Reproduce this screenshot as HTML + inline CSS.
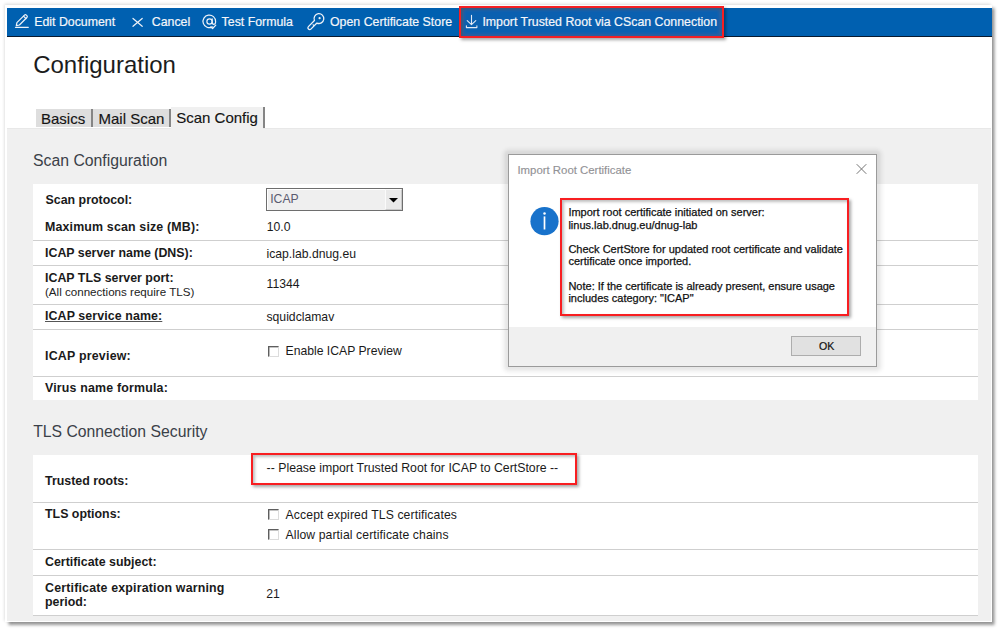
<!DOCTYPE html>
<html><head><meta charset="utf-8"><title>Configuration</title>
<style>
html,body{margin:0;padding:0;}
body{width:1000px;height:631px;overflow:hidden;position:relative;background:#fff;font-family:"Liberation Sans",sans-serif;}
.t{position:absolute;white-space:nowrap;line-height:1;}
.r{position:absolute;}
</style></head><body>
<div class="r" style="left:5px;top:4.5px;width:986.6px;height:617.5px;background:#fff;box-shadow:2.5px 3px 3px rgba(0,0,0,0.42),-1.5px -1px 3px rgba(0,0,0,0.15);"></div>
<div class="r" style="left:7px;top:8px;width:984.6px;height:613px;background:#fff;"></div>
<div class="r" style="left:7px;top:8px;width:984.6px;height:29px;background:#0060b0;border-bottom:1px solid #081a30;box-sizing:border-box;"></div>
<div class="t" style="left:34.20px;top:15.75px;font-size:12.35px;color:#f4f6fa;font-weight:normal;-webkit-text-stroke:0.2px #f4f6fa;">Edit Document</div>
<div class="t" style="left:151.80px;top:15.75px;font-size:12.35px;color:#f4f6fa;font-weight:normal;-webkit-text-stroke:0.2px #f4f6fa;">Cancel</div>
<div class="t" style="left:221.60px;top:15.75px;font-size:12.35px;color:#f4f6fa;font-weight:normal;-webkit-text-stroke:0.2px #f4f6fa;">Test Formula</div>
<div class="t" style="left:330.00px;top:15.75px;font-size:12.35px;color:#f4f6fa;font-weight:normal;-webkit-text-stroke:0.2px #f4f6fa;">Open Certificate Store</div>
<div class="r" style="left:459px;top:6px;width:265px;height:32px;border:2px solid #f81e21;box-sizing:border-box;background:#2f5f9f;box-shadow:2px 2px 3px rgba(0,0,0,0.35), inset 2px 2px 3px rgba(80,80,80,0.5);"></div>
<div class="r" style="left:464px;top:10px;width:255px;height:24px;background:#0a60b0;filter:blur(1.5px);"></div>
<div class="t" style="left:482.40px;top:15.75px;font-size:12.35px;color:#f4f6fa;font-weight:normal;-webkit-text-stroke:0.2px #f4f6fa;">Import Trusted Root via CScan Connection</div>
<svg class="r" style="left:0;top:0" width="1000" height="40" viewBox="0 0 1000 40">
<g fill="none" stroke="#eef2f8" stroke-width="1.2" stroke-linecap="round" stroke-linejoin="round">
<path d="M15.5 27.3 H28.3"/>
<path d="M16.3 25.6 L16.9 22.6 L24.5 15.1 Q25.4 14.2 26.3 15.1 L26.9 15.7 Q27.8 16.6 26.9 17.5 L19.4 25.0 Z"/>
<path d="M23.5 16.1 L25.9 18.5"/>
<path d="M133 18.5 L142.2 26.3 M142.2 18.5 L133 26.3"/>
<path d="M212.3 26.9 A6.3 6.3 0 1 1 215.6 21.5 L215.6 22.3 Q215.6 24.3 213.9 24.3 Q212.2 24.3 212.2 22.3 L212.2 18.8"/>
<circle cx="209.5" cy="21.5" r="2.6"/>
<path d="M210.8 27.0 L212.6 28.5 L215.8 25.1"/>
</g>
<g transform="translate(318.9 18.6) rotate(135)" fill="none" stroke="#eef2f8" stroke-width="1.3" stroke-linejoin="round">
<path d="M4.55 -1.75 A4.9 4.9 0 1 0 4.55 1.75 L13.1 1.75 Q14.8 1.75 14.8 0 Q14.8 -1.75 13.1 -1.75 Z"/>
<path d="M8.5 -1.75 V0.2" stroke-width="1"/>
</g>
<circle cx="319.6" cy="18.2" r="1.1" fill="#eef2f8"/>
<g fill="none" stroke="#e2e9f4" stroke-width="1.1" stroke-linecap="round" stroke-linejoin="round">
<path d="M471.5 15.3 V24.4 M467.2 20.6 L471.5 24.6 L475.8 20.6"/>
<path d="M466.4 25.7 V27.6 H476.9 V25.7"/>
</g>
</svg>
<div class="t" style="left:33.20px;top:52.98px;font-size:24px;color:#1c1c1c;font-weight:normal;">Configuration</div>
<div class="r" style="left:7px;top:128px;width:984px;height:492.6px;background:#f0f0f0;border-top:1px solid #e8e8e8;box-sizing:border-box;"></div>
<div class="r" style="left:36px;top:109px;width:55px;height:18px;background:#dedede;"></div>
<div class="r" style="left:91px;top:109px;width:1.5px;height:18px;background:#858585;"></div>
<div class="r" style="left:92.5px;top:109px;width:76.5px;height:18px;background:#dedede;"></div>
<div class="r" style="left:169px;top:109px;width:1.6999999999999886px;height:18px;background:#858585;"></div>
<div class="r" style="left:170.7px;top:107px;width:92.30000000000001px;height:22px;background:#f0f0f0;"></div>
<div class="r" style="left:263px;top:107px;width:1.5px;height:21px;background:#858585;"></div>
<div class="t" style="left:41.00px;top:111.30px;font-size:15px;color:#141414;font-weight:normal;-webkit-text-stroke:0.15px #141414;">Basics</div>
<div class="t" style="left:98.50px;top:111.30px;font-size:15px;color:#141414;font-weight:normal;-webkit-text-stroke:0.15px #141414;">Mail Scan</div>
<div class="t" style="left:176.20px;top:110.10px;font-size:15px;color:#141414;font-weight:normal;-webkit-text-stroke:0.15px #141414;">Scan Config</div>
<div class="t" style="left:33.00px;top:152.73px;font-size:15.8px;color:#3a4048;font-weight:normal;">Scan Configuration</div>
<div class="r" style="left:33px;top:184px;width:945px;height:216px;background:#fff;"></div>
<div class="r" style="left:33px;top:240px;width:945px;height:1px;background:#cfcfcf;"></div>
<div class="r" style="left:33px;top:265px;width:945px;height:1px;background:#cfcfcf;"></div>
<div class="r" style="left:33px;top:304px;width:945px;height:1px;background:#cfcfcf;"></div>
<div class="r" style="left:33px;top:329px;width:945px;height:1px;background:#cfcfcf;"></div>
<div class="r" style="left:33px;top:376px;width:945px;height:1px;background:#cfcfcf;"></div>
<div class="t" style="left:45.50px;top:193.50px;font-size:12.4px;color:#1a1a1a;font-weight:bold;">Scan protocol:</div>
<div class="t" style="left:45.00px;top:220.70px;font-size:12.4px;color:#1a1a1a;font-weight:bold;letter-spacing:0.16px;">Maximum scan size (MB):</div>
<div class="t" style="left:45.00px;top:246.50px;font-size:12.4px;color:#1a1a1a;font-weight:bold;">ICAP server name (DNS):</div>
<div class="t" style="left:45.00px;top:271.50px;font-size:12.4px;color:#1a1a1a;font-weight:bold;">ICAP TLS server port:</div>
<div class="t" style="left:45.00px;top:285.68px;font-size:11.6px;color:#222;font-weight:normal;">(All connections require TLS)</div>
<div class="t" style="left:45.00px;top:310.30px;font-size:12.4px;color:#1a1a1a;font-weight:bold;text-decoration:underline;text-decoration-color:#555;letter-spacing:0.1px;">ICAP service name:</div>
<div class="t" style="left:45.00px;top:349.50px;font-size:12.4px;color:#1a1a1a;font-weight:bold;letter-spacing:0.22px;">ICAP preview:</div>
<div class="t" style="left:45.00px;top:382.00px;font-size:12.4px;color:#1a1a1a;font-weight:bold;letter-spacing:0.18px;">Virus name formula:</div>
<div class="r" style="left:266px;top:188px;width:137px;height:23px;background:#efefef;border:1px solid #6e6e6e;box-sizing:border-box;box-shadow:inset 1px 1px 0 #fff;"></div>
<div class="r" style="left:385px;top:189px;width:17px;height:21px;background:#e9e9e9;border:1px solid;border-color:#fafafa #c8c8c8 #c8c8c8 #fafafa;box-sizing:border-box;"></div>
<svg class="r" style="left:389px;top:198px" width="9" height="5"><path d="M0 0 H9 L4.5 4.6 Z" fill="#000"/></svg>
<div class="t" style="left:270.20px;top:193.37px;font-size:12.2px;color:#5b5b70;font-weight:normal;">ICAP</div>
<div class="t" style="left:266.80px;top:220.87px;font-size:12.2px;color:#1a1a1a;font-weight:normal;">10.0</div>
<div class="t" style="left:266.50px;top:247.57px;font-size:12.2px;color:#1a1a1a;font-weight:normal;">icap.lab.dnug.eu</div>
<div class="t" style="left:266.60px;top:277.67px;font-size:12.2px;color:#1a1a1a;font-weight:normal;">11344</div>
<div class="t" style="left:266.50px;top:310.57px;font-size:12.2px;color:#1a1a1a;font-weight:normal;">squidclamav</div>
<div class="r" style="left:268px;top:345.5px;width:11px;height:11.0px;background:#fff;border:1px solid;border-color:#5e5e5e #dcdcdc #dcdcdc #5e5e5e;box-sizing:border-box;box-shadow:inset 0.6px 0.6px 0 #8a8a8a;"></div>
<div class="t" style="left:285.50px;top:345.27px;font-size:12.2px;color:#1a1a1a;font-weight:normal;">Enable ICAP Preview</div>
<div class="t" style="left:33.20px;top:424.17px;font-size:15.75px;color:#3a4048;font-weight:normal;">TLS Connection Security</div>
<div class="r" style="left:33px;top:455px;width:945px;height:161px;background:#fff;"></div>
<div class="r" style="left:33px;top:502px;width:945px;height:1px;background:#cfcfcf;"></div>
<div class="r" style="left:33px;top:549px;width:945px;height:1px;background:#cfcfcf;"></div>
<div class="r" style="left:33px;top:575px;width:945px;height:1px;background:#cfcfcf;"></div>
<div class="r" style="left:33px;top:615px;width:945px;height:1px;background:#cfcfcf;"></div>
<div class="t" style="left:45.00px;top:475.00px;font-size:12.4px;color:#1a1a1a;font-weight:bold;">Trusted roots:</div>
<div class="t" style="left:45.00px;top:508.20px;font-size:12.4px;color:#1a1a1a;font-weight:bold;">TLS options:</div>
<div class="t" style="left:45.00px;top:555.70px;font-size:12.4px;color:#1a1a1a;font-weight:bold;">Certificate subject:</div>
<div class="t" style="left:45.00px;top:581.80px;font-size:12.4px;color:#1a1a1a;font-weight:bold;letter-spacing:0.18px;">Certificate expiration warning</div>
<div class="t" style="left:45.00px;top:595.70px;font-size:12.4px;color:#1a1a1a;font-weight:bold;">period:</div>
<div class="r" style="left:251px;top:453px;width:326px;height:32px;border:2px solid #f81e21;box-sizing:border-box;background:#fff;box-shadow:2px 2px 3px rgba(0,0,0,0.35), inset 2px 2px 3px rgba(0,0,0,0.25);"></div>
<div class="t" style="left:266.60px;top:461.59px;font-size:12.3px;color:#1a1a1a;font-weight:normal;">-- Please import Trusted Root for ICAP to CertStore --</div>
<div class="r" style="left:268px;top:509px;width:11px;height:11px;background:#fff;border:1px solid;border-color:#5e5e5e #dcdcdc #dcdcdc #5e5e5e;box-sizing:border-box;box-shadow:inset 0.6px 0.6px 0 #8a8a8a;"></div>
<div class="r" style="left:268px;top:529px;width:11px;height:11px;background:#fff;border:1px solid;border-color:#5e5e5e #dcdcdc #dcdcdc #5e5e5e;box-sizing:border-box;box-shadow:inset 0.6px 0.6px 0 #8a8a8a;"></div>
<div class="t" style="left:285.60px;top:509.17px;font-size:12.2px;color:#1a1a1a;font-weight:normal;letter-spacing:0.12px;">Accept expired TLS certificates</div>
<div class="t" style="left:285.60px;top:528.97px;font-size:12.2px;color:#1a1a1a;font-weight:normal;letter-spacing:0.1px;">Allow partial certificate chains</div>
<div class="t" style="left:266.30px;top:587.97px;font-size:12.2px;color:#1a1a1a;font-weight:normal;">21</div>
<div class="r" style="left:502px;top:148px;width:381px;height:225px;background:rgba(0,0,0,0.045);border-radius:7px;filter:blur(1.5px);"></div>
<div class="r" style="left:505px;top:151px;width:375px;height:219px;background:rgba(0,0,0,0.05);border-radius:4px;filter:blur(1px);"></div>
<div class="r" style="left:508px;top:154px;width:369px;height:213px;background:#fff;border:1px solid #9a9a9a;box-sizing:border-box;"></div>
<div class="r" style="left:509px;top:327px;width:367px;height:39px;background:#f0f0f0;"></div>
<div class="t" style="left:517.40px;top:164.65px;font-size:11.4px;color:#929296;font-weight:normal;-webkit-text-stroke:0.15px #929296;">Import Root Certificate</div>
<svg class="r" style="left:850px;top:158px" width="22" height="22"><path d="M6.7 6.2 L16.3 15.8 M16.3 6.2 L6.7 15.8" stroke="#747474" stroke-width="1" fill="none"/></svg>
<svg class="r" style="left:528px;top:205px" width="34" height="34"><circle cx="16.5" cy="16.2" r="14.1" fill="#1872cb"/><circle cx="16.5" cy="8.6" r="1.25" fill="#fff"/><rect x="15.65" y="11.4" width="1.7" height="13.1" fill="#fff"/></svg>
<div class="r" style="left:560px;top:198px;width:289px;height:118px;border:2px solid #f81e21;box-sizing:border-box;background:#fff;box-shadow:2px 2px 3px rgba(0,0,0,0.35), inset 2px 2px 3px rgba(0,0,0,0.25);"></div>
<div class="t" style="left:568.40px;top:207.49px;font-size:11px;color:#111;font-weight:normal;-webkit-text-stroke:0.25px #111;">Import root certificate initiated on server:</div>
<div class="t" style="left:568.40px;top:219.79px;font-size:11px;color:#111;font-weight:normal;-webkit-text-stroke:0.25px #111;">linus.lab.dnug.eu/dnug-lab</div>
<div class="t" style="left:568.40px;top:243.89px;font-size:11px;color:#111;font-weight:normal;-webkit-text-stroke:0.25px #111;">Check CertStore for updated root certificate and validate</div>
<div class="t" style="left:568.40px;top:256.29px;font-size:11px;color:#111;font-weight:normal;-webkit-text-stroke:0.25px #111;">certificate once imported.</div>
<div class="t" style="left:568.40px;top:281.39px;font-size:11px;color:#111;font-weight:normal;-webkit-text-stroke:0.25px #111;">Note: If the certificate is already present, ensure usage</div>
<div class="t" style="left:568.40px;top:293.39px;font-size:11px;color:#111;font-weight:normal;-webkit-text-stroke:0.25px #111;">includes category: "ICAP"</div>
<div class="r" style="left:791px;top:336px;width:70px;height:20px;background:#e1e1e1;border:1px solid #adadad;box-sizing:border-box;"></div>
<div class="t" style="left:819.00px;top:341.33px;font-size:10.6px;color:#111;font-weight:normal;-webkit-text-stroke:0.2px #111;">OK</div>
</body></html>
